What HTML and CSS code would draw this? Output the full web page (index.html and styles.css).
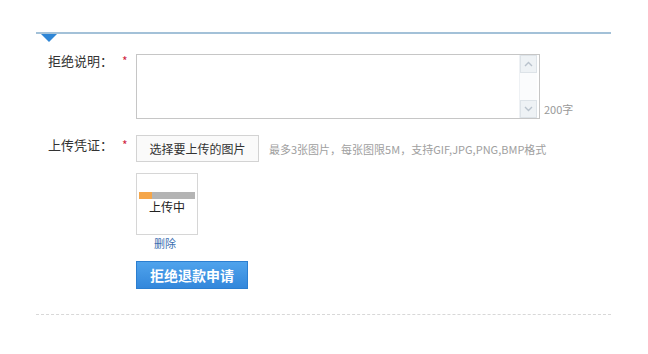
FILE: index.html
```html
<!DOCTYPE html>
<html lang="zh-CN">
<head>
    <meta charset="UTF-8">
    <title>拒绝退款申请</title>
    <link rel="stylesheet" href="styles.css">
</head>
<body>
    <div class="panel">
        <div class="panel-head">
            <span class="arrow"></span>
        </div>

        <div class="form-row row-reason">
            <label class="form-label">拒绝说明：</label>
            <span class="required">*</span>
            <div class="textbox">
                <textarea class="reason-input"></textarea>
                <div class="scrollbar">
                    <div class="scroll-btn">
                        <svg width="9" height="6" viewBox="0 0 9 6"><path d="M1 5 L4.5 1.5 L8 5" fill="none" stroke="#b8c2cc" stroke-width="1.4"/></svg>
                    </div>
                    <div class="scroll-btn">
                        <svg width="9" height="6" viewBox="0 0 9 6"><path d="M1 1 L4.5 4.5 L8 1" fill="none" stroke="#b8c2cc" stroke-width="1.4"/></svg>
                    </div>
                </div>
            </div>
            <span class="count">200字</span>
        </div>

        <div class="form-row row-upload">
            <label class="form-label">上传凭证：</label>
            <span class="required">*</span>
            <div class="upload-area">
                <div class="upload-line">
                    <button class="choose-btn">选择要上传的图片</button>
                    <span class="hint">最多3张图片，每张图限5M，支持GIF,JPG,PNG,BMP格式</span>
                </div>
                <div class="thumb">
                    <div class="progress"><div class="progress-done"></div></div>
                    <div class="thumb-text">上传中</div>
                </div>
                <a class="delete-link">删除</a>
                <button class="submit-btn">拒绝退款申请</button>
            </div>
        </div>

        <div class="panel-foot"></div>
    </div>
</body>
</html>
```

FILE: styles.css
```css
body {
    margin: 0;
    background-color: #fff;
    font-family: "Noto Sans CJK SC", "DejaVu Sans", sans-serif;
    font-size: 13px;
    color: #333;
}
.panel {
    width: 575px;
    margin-left: 36px;
    padding-top: 32px;
}
.panel-head {
    position: relative;
    height: 2px;
    background-color: #a3c1d8;
}
.arrow {
    position: absolute;
    left: 5px;
    top: 2px;
    width: 0;
    height: 0;
    border-left: 8px solid transparent;
    border-right: 8px solid transparent;
    border-top: 8px solid #2f86d6;
}
.form-row {
    display: flex;
    align-items: flex-start;
    padding-left: 12px;
}
.row-reason {
    margin-top: 20px;
}
.row-upload {
    margin-top: 16px;
}
.form-label {
    width: 70px;
    line-height: 14px;
}
.row-upload .form-label {
    margin-top: 3px;
}
.required {
    width: 14px;
    margin-left: 4px;
    color: #d0273f;
    font-size: 12px;
    line-height: 14px;
}
.row-upload .required {
    margin-top: 3px;
}
.textbox {
    display: flex;
    width: 402px;
    height: 63px;
    border: 1px solid #c6c6c6;
    background-color: #fff;
}
.reason-input {
    flex: 1;
    border: none;
    resize: none;
    outline: none;
    padding: 4px;
    font-family: inherit;
}
.scrollbar {
    width: 17px;
    margin-right: 2px;
    display: flex;
    flex-direction: column;
    justify-content: space-between;
    background-color: #fbfcfd;
    border-left: 1px solid #eef1f4;
}
.scroll-btn {
    height: 16px;
    display: flex;
    align-items: center;
    justify-content: center;
    background-color: #eef2f5;
    border: 1px solid #dde3e8;
}
.count {
    margin-left: 4px;
    margin-top: 47px;
    font-size: 11px;
    color: #999;
}
.upload-area {
    display: flex;
    flex-direction: column;
    align-items: flex-start;
}
.upload-line {
    display: flex;
    align-items: center;
}
.choose-btn {
    width: 123px;
    height: 27px;
    border: 1px solid #d3d3d3;
    background-color: #fafafa;
    font-family: inherit;
    font-size: 12px;
    color: #333;
    padding: 0;
}
.hint {
    margin-left: 10px;
    font-size: 11px;
    color: #a0a0a0;
}
.thumb {
    margin-top: 11px;
    width: 60px;
    height: 60px;
    border: 1px solid #d6d6d6;
    background-color: #fff;
}
.progress {
    margin: 18px 2px 0 2px;
    height: 7px;
    background-color: #b4b4b4;
}
.progress-done {
    width: 13px;
    height: 7px;
    background-color: #f5a64a;
}
.thumb-text {
    text-align: center;
    font-size: 12px;
    line-height: 14px;
    margin-top: 1px;
    color: #222;
}
.delete-link {
    margin-top: 1px;
    margin-left: 18px;
    font-size: 11px;
    color: #3a6fb0;
    line-height: 14px;
}
.submit-btn {
    margin-top: 11px;
    width: 112px;
    height: 28px;
    border: 1px solid #2b7ed0;
    background: linear-gradient(#4fa3ec, #3387db);
    color: #fff;
    font-family: inherit;
    font-size: 14px;
    font-weight: bold;
    padding: 0;
}
.panel-foot {
    margin-top: 25px;
    border-top: 1px dashed #d8d8d8;
}
```
